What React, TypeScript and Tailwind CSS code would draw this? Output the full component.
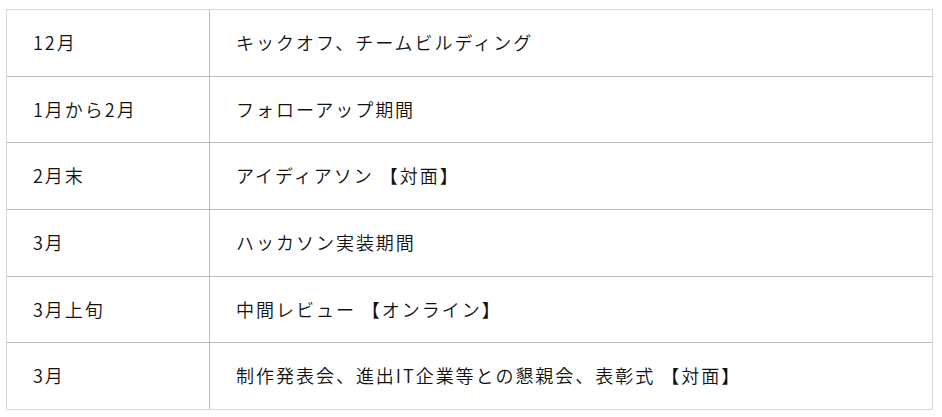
import React from "react";

const rows = [
  { when: "12月", what: "キックオフ、チームビルディング" },
  { when: "1月から2月", what: "フォローアップ期間" },
  { when: "2月末", what: "アイディアソン 【対面】" },
  { when: "3月", what: "ハッカソン実装期間" },
  { when: "3月上旬", what: "中間レビュー 【オンライン】" },
  { when: "3月", what: "制作発表会、進出IT企業等との懇親会、表彰式 【対面】" },
];

export default function App() {
  return (
    <div
      className="min-h-screen bg-white pl-[6px] pt-[9px] font-[350] text-[#111]"
      style={{ fontFamily: '"Noto Sans CJK JP", "Noto Sans", sans-serif' }}
    >
      <div className="flex h-[401px] w-[927px] flex-col border border-[#d6d6d6]">
        {rows.map((r, i) => (
          <div
            key={i}
            className={
              i < rows.length - 1
                ? "flex flex-1 border-b border-[#bdbdbd]"
                : "flex flex-1"
            }
          >
            <div className="flex w-[203px] items-center border-r border-[#bdbdbd] pb-[1px] pl-[26px] text-[18px] tracking-[0.11em]">
              {r.when}
            </div>
            <div className="flex flex-1 items-center pb-[1px] pl-[26px] text-[18px] tracking-[0.11em]">
              {r.what}
            </div>
          </div>
        ))}
      </div>
    </div>
  );
}
